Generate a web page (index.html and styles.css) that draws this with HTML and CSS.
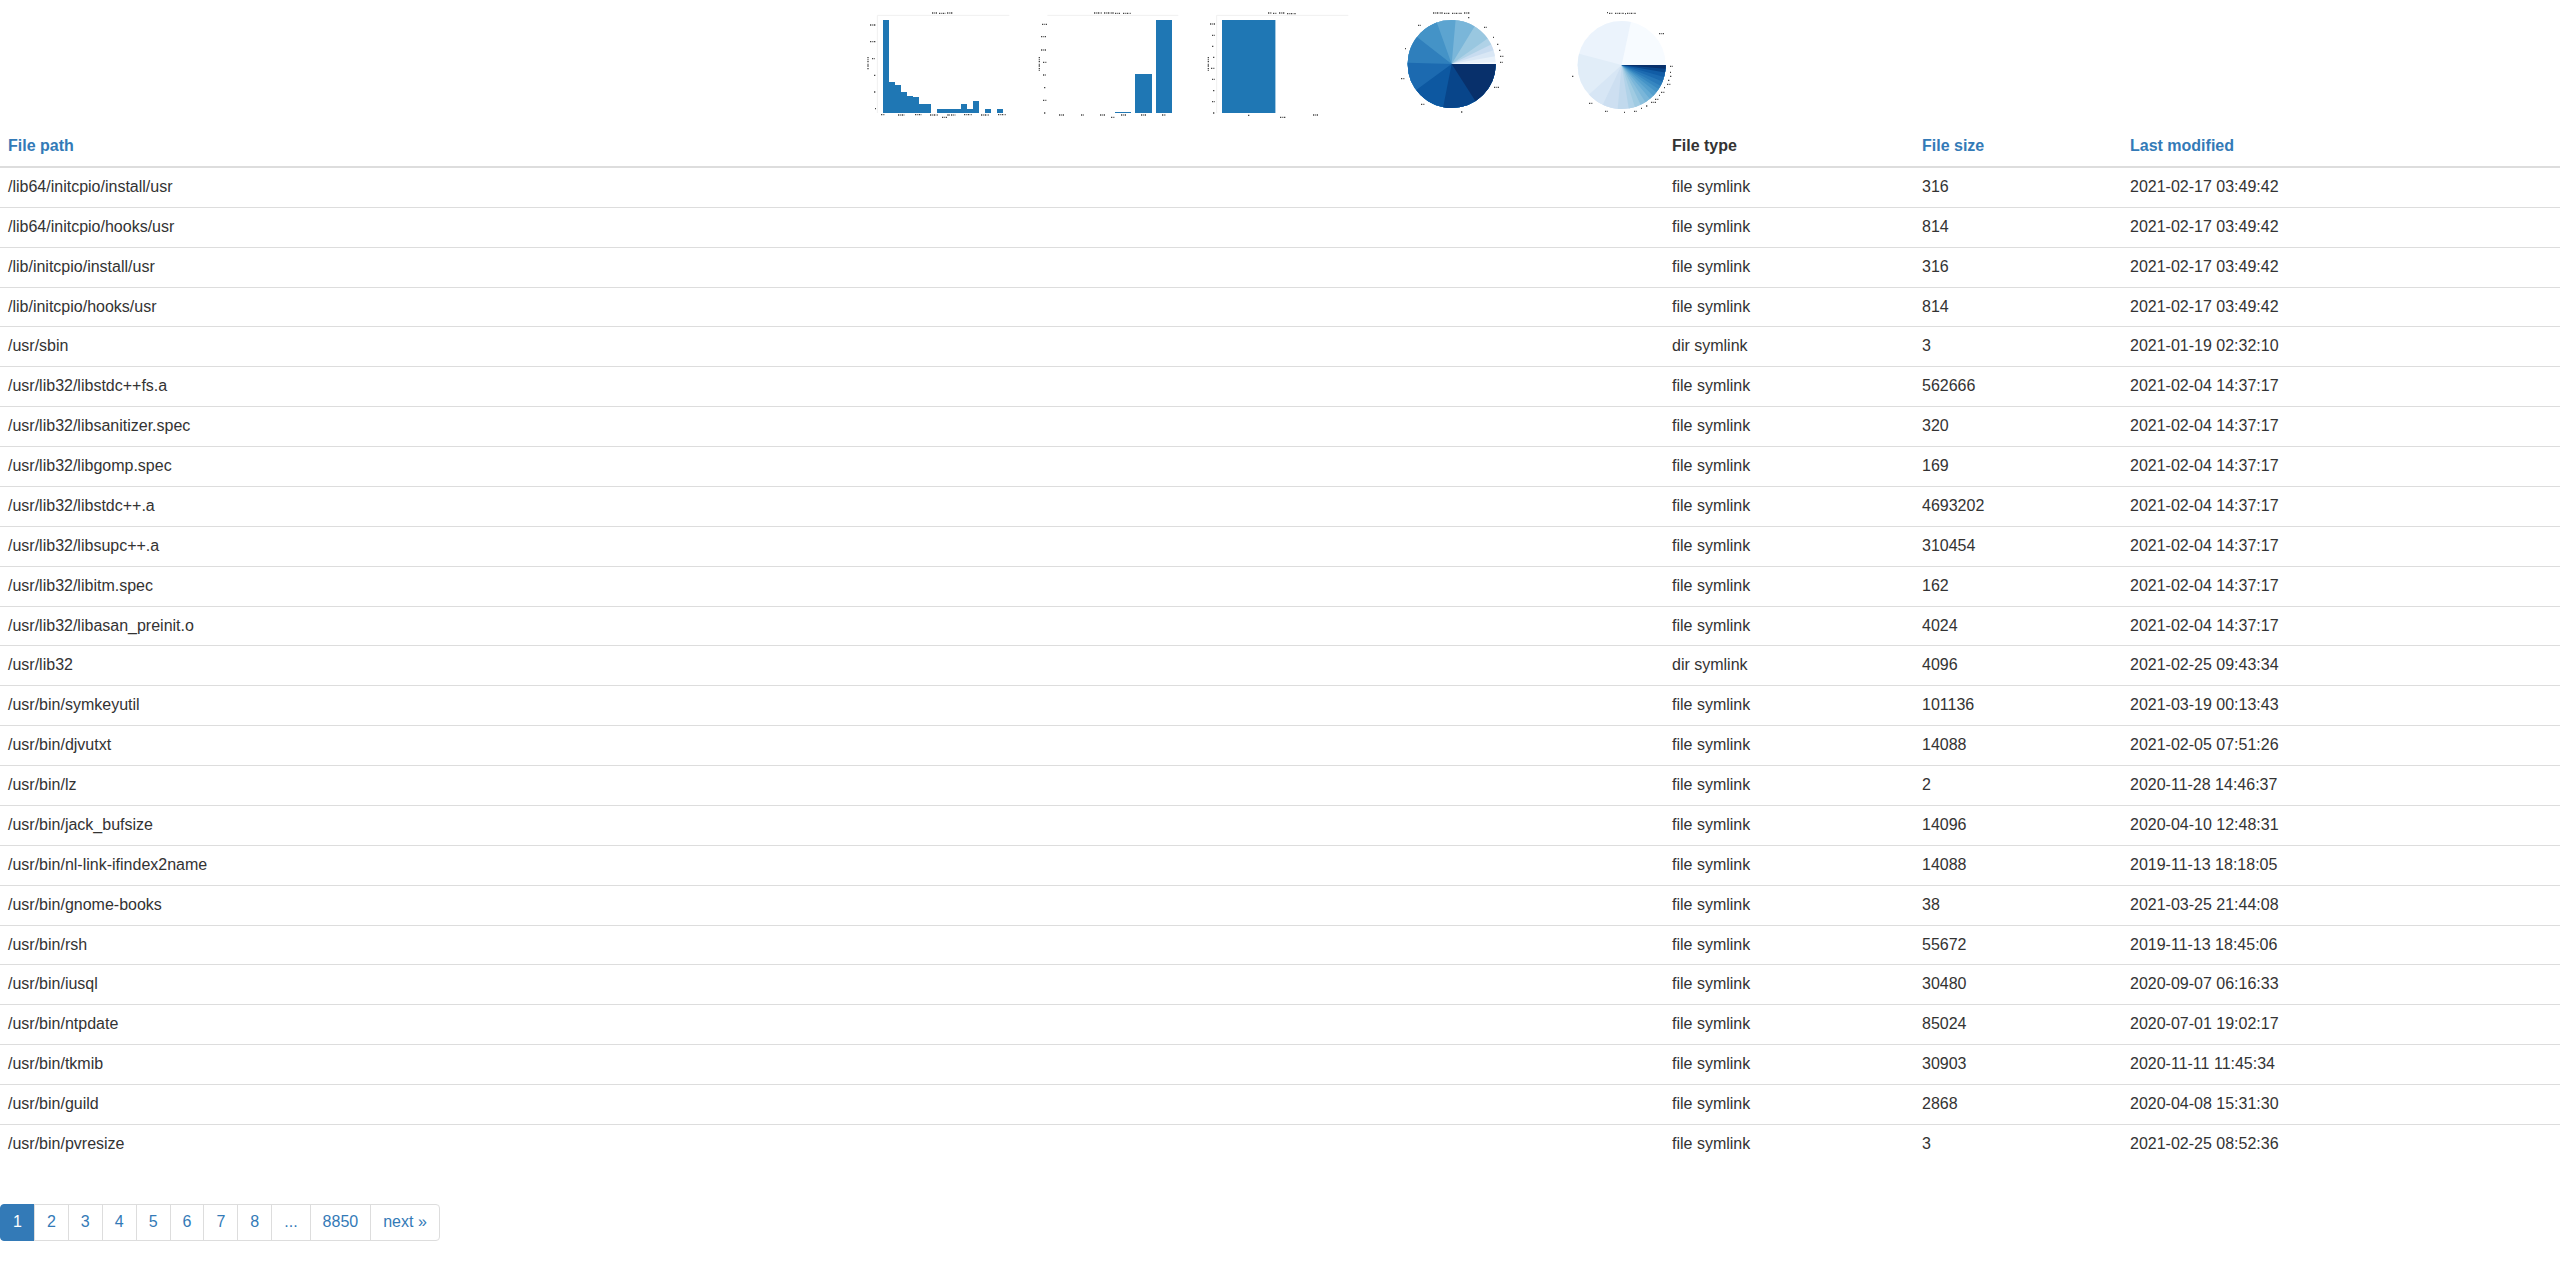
FILE: index.html
```html
<!DOCTYPE html>
<html lang="en">
<head>
<meta charset="utf-8">
<title>Files</title>
<link rel="stylesheet" href="styles.css">
</head>
<body>
<div class="charts">
  <svg class="chart" viewBox="15 0 510 381">
    <path class="frame" d="M82 339V46H478"/>
    <path class="bar" d="M99 339V60h18v186h18v9h18v21h18v12h18v3h18v21h36v27zM261 339v-12h72v-15h18v15h18v-24h18v36zM405 339v-12h18v12zM441 339v-12h18v12z"/>
    <path class="mark" d="M246 39h16M267 40h20M291 39h18M60 75h18M60 125h18M66 176h9M72 226h6M72 276h6M75 326h3M54 171v39M93 344h12M144 345h19M195 344h19M240 345h24M292 345h24M342 344h24M393 345h24M444 344h24M276 352h15"/>
  </svg>
  <svg class="chart" viewBox="15 0 510 381">
    <path class="frame" d="M82 46H475"/>
    <path class="bar" d="M285 336h48v3h-48zM345 222h51v117h-51zM408 60h48v279h-48z"/>
    <path class="mark" d="M222 39h24M252 39h30M285 40h15M309 40h24M66 73h15M63 110h15M63 150h15M69 187h12M69 225h9M72 263h6M69 301h12M72 339h6M58 171v42M117 345h15M183 345h9M240 345h15M303 345h15M363 345h15M426 345h12M273 352h12"/>
  </svg>
  <svg class="chart" viewBox="15 0 510 381">
    <path class="frame" d="M80 339V46H475"/>
    <path class="bar-edge" d="M255 60h3v279h-3z"/>
    <path class="bar" d="M96 60h159v279H96z"/>
    <path class="mark" d="M234 39h12M249 40h12M267 39h18M291 41h27M60 72h15M66 106h9M66 139h6M69 172h6M63 205h12M66 238h9M69 272h6M66 305h9M69 339h6M55 171v42M174 346h6M369 345h15M270 352h18"/>
  </svg>
  <svg class="chart" viewBox="15 0 510 381">
    <g class="pie">
      <circle cx="275" cy="192" r="66" pathLength="360" stroke="#f7fbff"/>
      <circle cx="275" cy="192" r="66" pathLength="360" stroke="#e8f1fa" stroke-dasharray="356 360"/>
      <circle cx="275" cy="192" r="66" pathLength="360" stroke="#d9e7f5" stroke-dasharray="348 360"/>
      <circle cx="275" cy="192" r="66" pathLength="360" stroke="#c8dcf0" stroke-dasharray="340 360"/>
      <circle cx="275" cy="192" r="66" pathLength="360" stroke="#b0d2e7" stroke-dasharray="332 360"/>
      <circle cx="275" cy="192" r="66" pathLength="360" stroke="#99c7e0" stroke-dasharray="323 360"/>
      <circle cx="275" cy="192" r="66" pathLength="360" stroke="#7ab6d9" stroke-dasharray="300 360"/>
      <circle cx="275" cy="192" r="66" pathLength="360" stroke="#5ca4d0" stroke-dasharray="274 360"/>
      <circle cx="275" cy="192" r="66" pathLength="360" stroke="#4493c7" stroke-dasharray="249 360"/>
      <circle cx="275" cy="192" r="66" pathLength="360" stroke="#2f7fbc" stroke-dasharray="217 360"/>
      <circle cx="275" cy="192" r="66" pathLength="360" stroke="#1c6ab0" stroke-dasharray="181 360"/>
      <circle cx="275" cy="192" r="66" pathLength="360" stroke="#0d58a1" stroke-dasharray="143 360"/>
      <circle cx="275" cy="192" r="66" pathLength="360" stroke="#08458a" stroke-dasharray="101 360"/>
      <circle cx="275" cy="192" r="66" pathLength="360" stroke="#08306b" stroke-dasharray="57 360"/>
    </g>
    <path class="mark" d="M219 39h30M252 40h18M276 40h30M312 39h18M324 53h6M372 82h9M399 112h3M411 133h6M417 151h6M420 169h12M420 187h9M174 76h9M135 146h3M123 236h12M183 313h12M303 336h6M402 262h15"/>
  </svg>
  <svg class="chart" viewBox="15 0 510 381">
    <g class="pie">
      <circle cx="275" cy="195" r="66" pathLength="360" stroke="#f7fbff"/>
      <circle cx="275" cy="195" r="66" pathLength="360" stroke="#ebf3fc" stroke-dasharray="281 360"/>
      <circle cx="275" cy="195" r="66" pathLength="360" stroke="#e1edf8" stroke-dasharray="194 360"/>
      <circle cx="275" cy="195" r="66" pathLength="360" stroke="#d7e6f5" stroke-dasharray="137 360"/>
      <circle cx="275" cy="195" r="66" pathLength="360" stroke="#cddff1" stroke-dasharray="115 360"/>
      <circle cx="275" cy="195" r="66" pathLength="360" stroke="#c1d9ed" stroke-dasharray="95 360"/>
      <circle cx="275" cy="195" r="66" pathLength="360" stroke="#b0d2e8" stroke-dasharray="80 360"/>
      <circle cx="275" cy="195" r="66" pathLength="360" stroke="#a0cbe2" stroke-dasharray="72 360"/>
      <circle cx="275" cy="195" r="66" pathLength="360" stroke="#8cc0dd" stroke-dasharray="64 360"/>
      <circle cx="275" cy="195" r="66" pathLength="360" stroke="#7ab6d9" stroke-dasharray="57 360"/>
      <circle cx="275" cy="195" r="66" pathLength="360" stroke="#66abd4" stroke-dasharray="50 360"/>
      <circle cx="275" cy="195" r="66" pathLength="360" stroke="#559fcd" stroke-dasharray="44 360"/>
      <circle cx="275" cy="195" r="66" pathLength="360" stroke="#4493c7" stroke-dasharray="38 360"/>
      <circle cx="275" cy="195" r="66" pathLength="360" stroke="#3686c0" stroke-dasharray="33 360"/>
      <circle cx="275" cy="195" r="66" pathLength="360" stroke="#2979b9" stroke-dasharray="28 360"/>
      <circle cx="275" cy="195" r="66" pathLength="360" stroke="#1c6ab0" stroke-dasharray="22 360"/>
      <circle cx="275" cy="195" r="66" pathLength="360" stroke="#115ca5" stroke-dasharray="16 360"/>
      <circle cx="275" cy="195" r="66" pathLength="360" stroke="#08458a" stroke-dasharray="10 360"/>
      <circle cx="275" cy="195" r="66" pathLength="360" stroke="#08306b" stroke-dasharray="5 360"/>
    </g>
    <path class="mark" d="M231 38h3M237 40h12M255 40h27M285 41h3M291 40h27M387 101h15M420 199h9M420 217h3M420 229h6M414 241h6M411 253h12M402 263h3M393 277h12M387 286h3M375 298h12M363 307h15M348 318h6M333 325h3M312 334h9M282 337h3M225 334h9M177 310h12M126 229h6"/>
  </svg>
</div>

<table class="files">
  <colgroup>
    <col class="col-path">
    <col class="col-type">
    <col class="col-size">
    <col>
  </colgroup>
  <thead>
    <tr><th><a href="#path">File path</a></th><th>File type</th><th><a href="#size">File size</a></th><th><a href="#modified">Last modified</a></th></tr>
  </thead>
  <tbody>
    <tr><td>/lib64/initcpio/install/usr</td><td>file symlink</td><td>316</td><td>2021-02-17 03:49:42</td></tr>
    <tr><td>/lib64/initcpio/hooks/usr</td><td>file symlink</td><td>814</td><td>2021-02-17 03:49:42</td></tr>
    <tr><td>/lib/initcpio/install/usr</td><td>file symlink</td><td>316</td><td>2021-02-17 03:49:42</td></tr>
    <tr><td>/lib/initcpio/hooks/usr</td><td>file symlink</td><td>814</td><td>2021-02-17 03:49:42</td></tr>
    <tr><td>/usr/sbin</td><td>dir symlink</td><td>3</td><td>2021-01-19 02:32:10</td></tr>
    <tr><td>/usr/lib32/libstdc++fs.a</td><td>file symlink</td><td>562666</td><td>2021-02-04 14:37:17</td></tr>
    <tr><td>/usr/lib32/libsanitizer.spec</td><td>file symlink</td><td>320</td><td>2021-02-04 14:37:17</td></tr>
    <tr><td>/usr/lib32/libgomp.spec</td><td>file symlink</td><td>169</td><td>2021-02-04 14:37:17</td></tr>
    <tr><td>/usr/lib32/libstdc++.a</td><td>file symlink</td><td>4693202</td><td>2021-02-04 14:37:17</td></tr>
    <tr><td>/usr/lib32/libsupc++.a</td><td>file symlink</td><td>310454</td><td>2021-02-04 14:37:17</td></tr>
    <tr><td>/usr/lib32/libitm.spec</td><td>file symlink</td><td>162</td><td>2021-02-04 14:37:17</td></tr>
    <tr><td>/usr/lib32/libasan_preinit.o</td><td>file symlink</td><td>4024</td><td>2021-02-04 14:37:17</td></tr>
    <tr><td>/usr/lib32</td><td>dir symlink</td><td>4096</td><td>2021-02-25 09:43:34</td></tr>
    <tr><td>/usr/bin/symkeyutil</td><td>file symlink</td><td>101136</td><td>2021-03-19 00:13:43</td></tr>
    <tr><td>/usr/bin/djvutxt</td><td>file symlink</td><td>14088</td><td>2021-02-05 07:51:26</td></tr>
    <tr><td>/usr/bin/lz</td><td>file symlink</td><td>2</td><td>2020-11-28 14:46:37</td></tr>
    <tr><td>/usr/bin/jack_bufsize</td><td>file symlink</td><td>14096</td><td>2020-04-10 12:48:31</td></tr>
    <tr><td>/usr/bin/nl-link-ifindex2name</td><td>file symlink</td><td>14088</td><td>2019-11-13 18:18:05</td></tr>
    <tr><td>/usr/bin/gnome-books</td><td>file symlink</td><td>38</td><td>2021-03-25 21:44:08</td></tr>
    <tr><td>/usr/bin/rsh</td><td>file symlink</td><td>55672</td><td>2019-11-13 18:45:06</td></tr>
    <tr><td>/usr/bin/iusql</td><td>file symlink</td><td>30480</td><td>2020-09-07 06:16:33</td></tr>
    <tr><td>/usr/bin/ntpdate</td><td>file symlink</td><td>85024</td><td>2020-07-01 19:02:17</td></tr>
    <tr><td>/usr/bin/tkmib</td><td>file symlink</td><td>30903</td><td>2020-11-11 11:45:34</td></tr>
    <tr><td>/usr/bin/guild</td><td>file symlink</td><td>2868</td><td>2020-04-08 15:31:30</td></tr>
    <tr><td>/usr/bin/pvresize</td><td>file symlink</td><td>3</td><td>2021-02-25 08:52:36</td></tr>
  </tbody>
</table>

<nav>
  <ul class="pagination">
    <li><a class="active" href="#1">1</a></li>
    <li><a href="#2">2</a></li>
    <li><a href="#3">3</a></li>
    <li><a href="#4">4</a></li>
    <li><a href="#5">5</a></li>
    <li><a href="#6">6</a></li>
    <li><a href="#7">7</a></li>
    <li><a href="#8">8</a></li>
    <li><a href="#more">...</a></li>
    <li><a href="#8850">8850</a></li>
    <li><a href="#next">next »</a></li>
  </ul>
</nav>
</body>
</html>
```
FILE: styles.css
```css
* {
  box-sizing: border-box;
}

body {
  margin: 0;
  font-family: "Liberation Sans", Arial, sans-serif;
  font-size: 16px;
  line-height: 1.43;
  color: #333;
  background: #fff;
}

a {
  color: #337ab7;
  text-decoration: none;
}

.charts {
  display: flex;
  justify-content: center;
}

.chart {
  display: block;
  width: 170px;
  height: 127px;
}

.frame {
  fill: none;
  stroke: #f0f0f0;
  stroke-width: 3;
}

.bar {
  fill: #1f77b4;
  shape-rendering: crispEdges;
}

.bar-edge {
  fill: #a5c9e1;
}

.pie {
  fill: none;
  stroke-width: 132;
}

/* tick labels and titles, too small to read at thumbnail size */
.mark {
  fill: none;
  stroke: #444;
  stroke-width: 4;
  stroke-dasharray: 4 2 2 3;
}

.files {
  width: 100%;
  margin-bottom: 20px;
  border-collapse: collapse;
  table-layout: fixed;
}

.col-path {
  width: 65%;
}

.col-type {
  width: 250px;
}

.col-size {
  width: 208px;
}

.files th,
.files td {
  padding: 8px;
  text-align: left;
  vertical-align: top;
  border-top: 1px solid #ddd;
}

.files th {
  border-top: 0;
  border-bottom: 2px solid #ddd;
}

.pagination {
  display: flex;
  margin: 40px 0 20px;
  padding: 0;
  list-style: none;
}

.pagination a {
  display: block;
  margin-left: -1px;
  padding: 6px 12px;
  border: 1px solid #ddd;
}

.pagination li:first-child a {
  margin-left: 0;
  border-radius: 4px 0 0 4px;
}

.pagination li:last-child a {
  border-radius: 0 4px 4px 0;
}

.pagination .active {
  color: #fff;
  background: #337ab7;
  border-color: #337ab7;
}
```
